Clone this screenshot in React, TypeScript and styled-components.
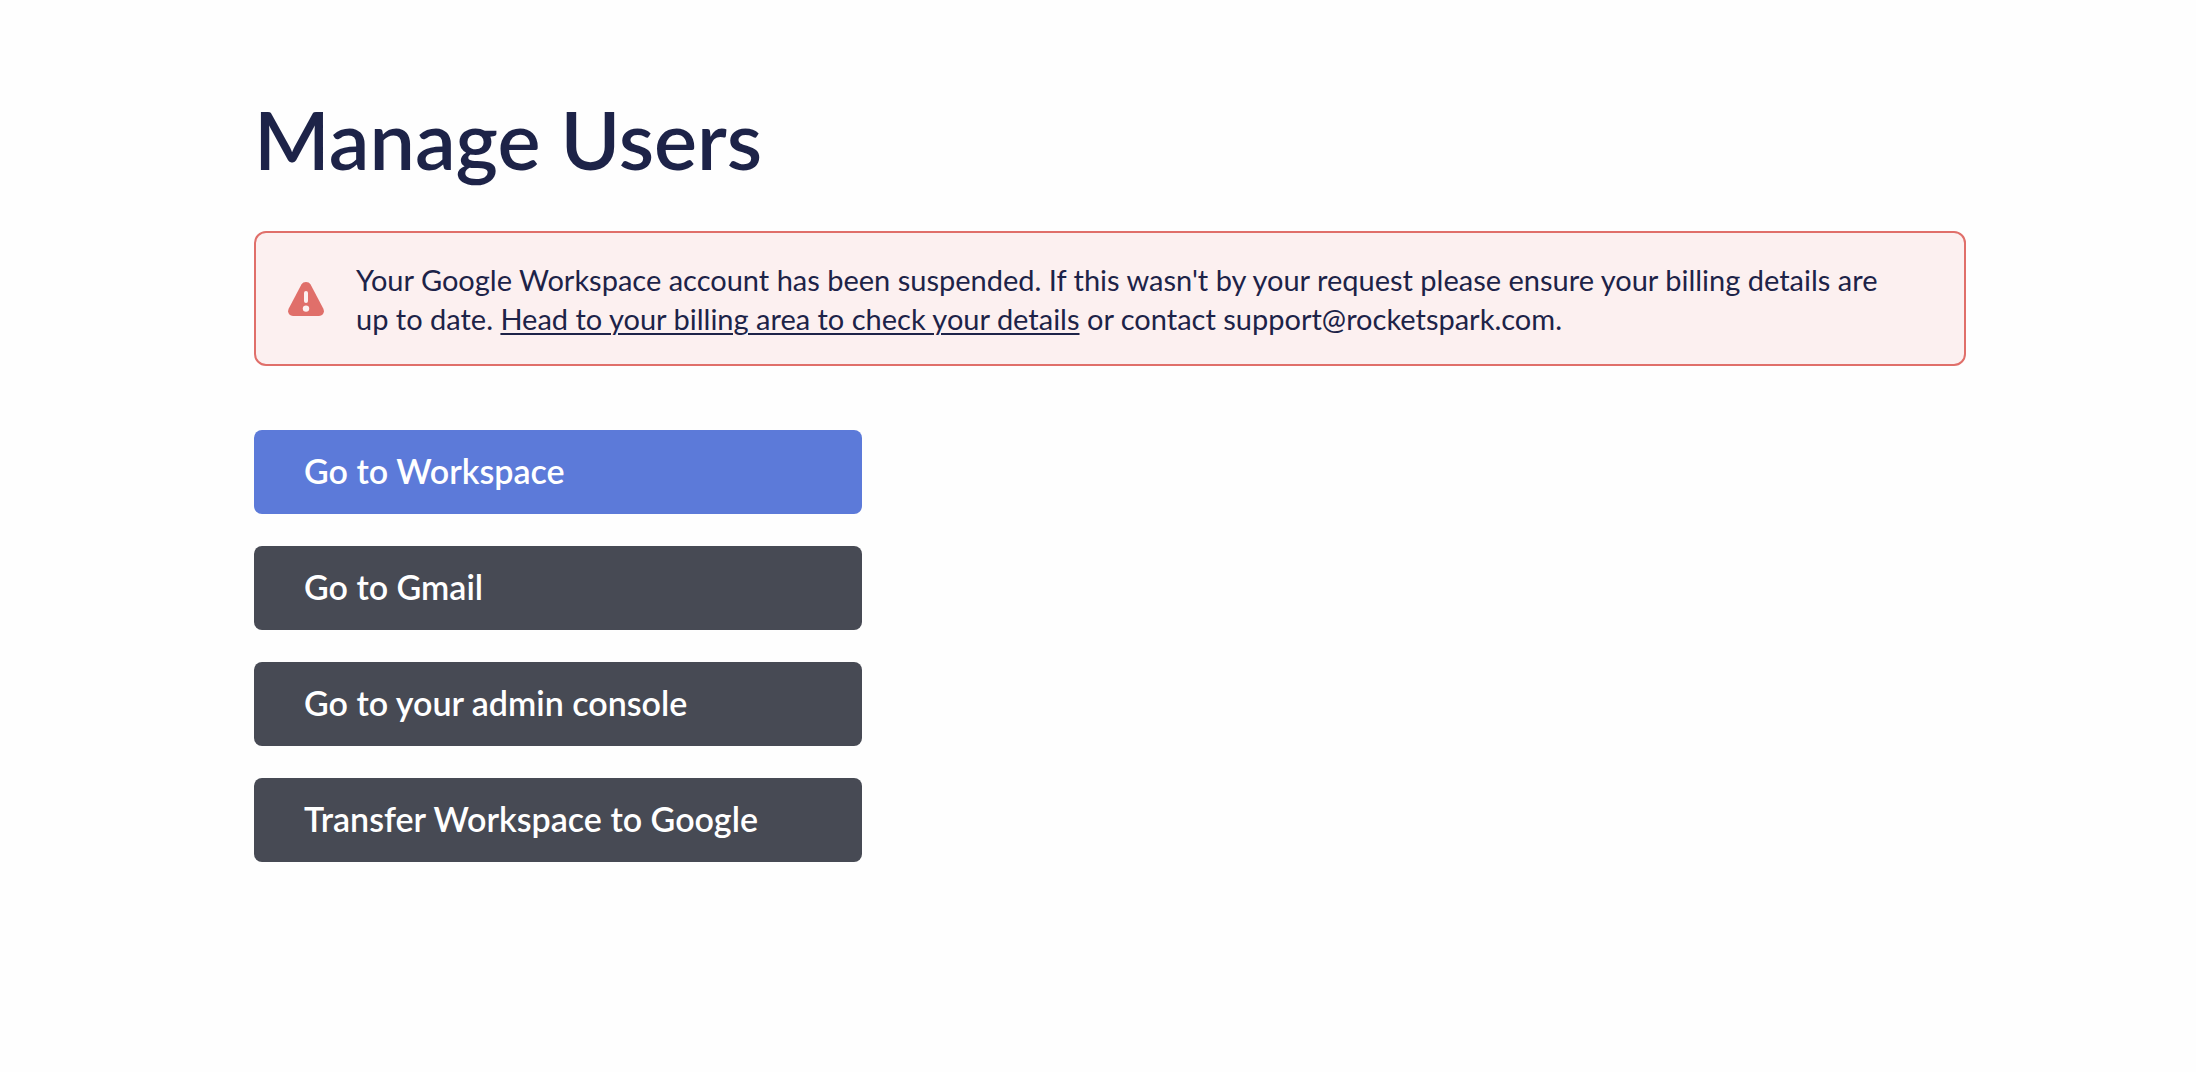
import React from "react";
import styled, { createGlobalStyle } from "styled-components";

const GlobalStyle = createGlobalStyle`
  *, *::before, *::after {
    box-sizing: border-box;
  }

  body {
    margin: 0;
    background: #fefefe;
    color: #1d2348;
    font-family: Lato, "Open Sans", sans-serif;
  }
`;

const Page = styled.main`
  padding: 91px 230px 96px 254px;
`;

const Title = styled.h1`
  margin: 0 0 45px;
  font-size: 81px;
  font-weight: 600;
  line-height: 95px;
`;

const Alert = styled.div`
  display: flex;
  align-items: center;
  gap: 32px;
  margin-bottom: 64px;
  padding: 27px 52px 26px 32px;
  border: 2px solid #e06f6a;
  border-radius: 12px;
  background: #fcf0f0;
`;

const AlertIcon = styled.svg`
  flex: none;
  width: 36px;
  height: 36px;
`;

const AlertText = styled.p`
  margin: 0;
  font-size: 29px;
  line-height: 39px;
`;

const AlertLink = styled.a`
  color: inherit;
  text-decoration: underline;
  text-decoration-thickness: 2px;
  text-underline-offset: 3px;
`;

const Actions = styled.div`
  display: flex;
  flex-direction: column;
  gap: 32px;
  max-width: 608px;
`;

const ActionButton = styled.button<{ $primary?: boolean }>`
  padding: 21px 50px 23px;
  border: 0;
  border-radius: 8px;
  background: ${({ $primary }) => ($primary ? "#5c7ad9" : "#474a54")};
  color: #fff;
  font: 600 34px/40px Lato, "Open Sans", sans-serif;
  text-align: left;
  cursor: pointer;
`;

export default function App() {
  return (
    <>
      <GlobalStyle />
      <Page>
        <Title>Manage Users</Title>
        <Alert role="alert">
          <AlertIcon viewBox="0 0 36 36" aria-hidden="true">
            <path
              d="M13.4 3.5C15.3 .2 20.7 .2 22.6 3.5L35.1 27.2C37.1 31.1 35.2 35 31 35H5C.8 35-1.1 31.1.9 27.2Z"
              fill="#e06f6a"
            />
            <rect x="16" y="10" width="4" height="12" rx="2" fill="#fcf0f0" />
            <circle cx="18" cy="27.6" r="3.2" fill="#fcf0f0" />
          </AlertIcon>
          <AlertText>
            Your Google Workspace account has been suspended. If this wasn't by your request please
            ensure your billing details are up to date.{" "}
            <AlertLink href="#billing">Head to your billing area to check your details</AlertLink> or
            contact support@rocketspark.com.
          </AlertText>
        </Alert>
        <Actions>
          <ActionButton type="button" $primary>
            Go to Workspace
          </ActionButton>
          <ActionButton type="button">Go to Gmail</ActionButton>
          <ActionButton type="button">Go to your admin console</ActionButton>
          <ActionButton type="button">Transfer Workspace to Google</ActionButton>
        </Actions>
      </Page>
    </>
  );
}
